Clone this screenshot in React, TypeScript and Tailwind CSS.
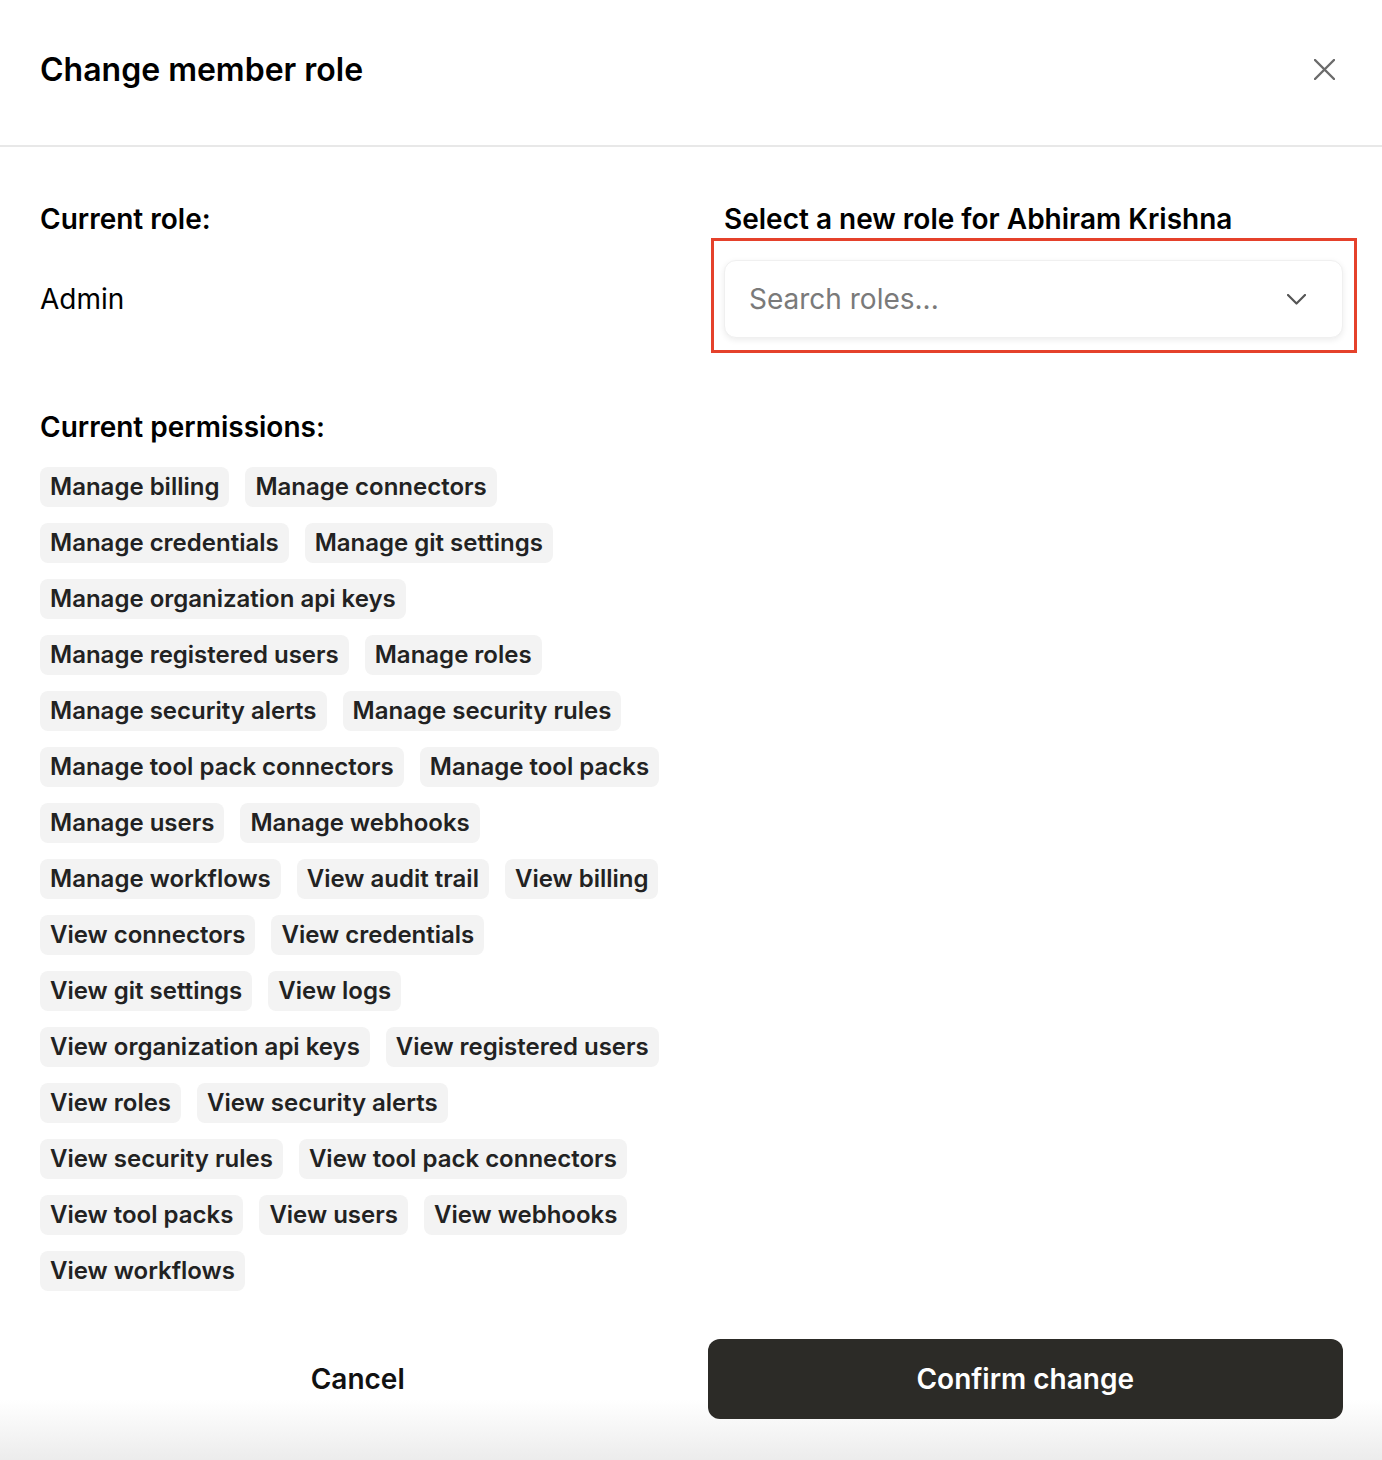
const permissionRows: string[][] = [
  ['Manage billing', 'Manage connectors'],
  ['Manage credentials', 'Manage git settings'],
  ['Manage organization api keys'],
  ['Manage registered users', 'Manage roles'],
  ['Manage security alerts', 'Manage security rules'],
  ['Manage tool pack connectors', 'Manage tool packs'],
  ['Manage users', 'Manage webhooks'],
  ['Manage workflows', 'View audit trail', 'View billing'],
  ['View connectors', 'View credentials'],
  ['View git settings', 'View logs'],
  ['View organization api keys', 'View registered users'],
  ['View roles', 'View security alerts'],
  ['View security rules', 'View tool pack connectors'],
  ['View tool packs', 'View users', 'View webhooks'],
  ['View workflows'],
]

function Chip({ label }: { label: string }) {
  return (
    <span className="inline-flex h-10 items-center rounded-lg bg-[#f3f3f3] px-[10px] text-[24px] font-semibold leading-none text-[#222]">
      {label}
    </span>
  )
}

export default function App() {
  return (
    <div className="relative min-h-[1460px] w-full bg-white font-['Inter',sans-serif] text-black">
      {/* bottom fade of the sheet */}
      <div className="absolute bottom-0 left-0 right-0 h-[60px] bg-gradient-to-b from-white to-[#ececec]" />

      {/* Header */}
      <div className="relative flex h-[147px] items-center justify-between border-b-2 border-[#e8e8e8] pb-[6px] pl-10 pr-[46px]">
        <h1 className="text-[32px] font-semibold">Change member role</h1>
        <button className="flex h-6 w-6 items-center justify-center">
          <svg width="21" height="21" viewBox="0 0 21 21" fill="none" stroke="#6b6b6b" strokeWidth="2.4" strokeLinecap="round">
            <path d="M1 1L20 20M20 1L1 20" />
          </svg>
        </button>
      </div>

      {/* Body */}
      <div className="relative pl-10 pr-[39px] pt-[54px]">
        <div className="grid grid-cols-2 gap-x-[65px]">
          <div>
            <h2 className="text-[28px] font-semibold leading-[36px]">Current role:</h2>
            <div className="mt-[23px] flex h-[78px] items-center text-[28px]">Admin</div>
          </div>
          <div>
            <h2 className="text-[28px] font-semibold leading-[36px]">Select a new role for Abhiram Krishna</h2>
            <div className="relative mt-[23px]">
              <div className="flex h-[78px] items-center justify-between rounded-xl border border-[#f0f0f0] bg-white pl-6 pr-9 shadow-[0_2px_6px_rgba(0,0,0,0.08)]">
                <span className="text-[28px] text-[#7a7a7a]">Search roles...</span>
                <svg width="19" height="11" viewBox="0 0 19 11" fill="none" stroke="#555" strokeWidth="2.2" strokeLinecap="round" strokeLinejoin="round">
                  <path d="M1 1L9.5 9.5L18 1" />
                </svg>
              </div>
              <div className="pointer-events-none absolute -bottom-[15px] -left-[13px] -right-[14px] -top-[22px] border-[3px] border-[#e5412b]" />
            </div>
          </div>
        </div>

        <h2 className="mt-[71px] text-[28px] font-semibold leading-[36px]">Current permissions:</h2>
        <div className="mt-[22px] flex flex-col gap-4">
          {permissionRows.map((row, i) => (
            <div key={i} className="flex gap-4">
              {row.map((p) => (
                <Chip key={p} label={p} />
              ))}
            </div>
          ))}
        </div>

        {/* Footer */}
        <div className="mt-12 grid grid-cols-2 gap-8">
          <button className="h-20 rounded-xl text-[28px] font-semibold text-[#111]">Cancel</button>
          <button className="h-20 rounded-xl bg-[#2c2b27] text-[28px] font-semibold text-white">Confirm change</button>
        </div>
      </div>
    </div>
  )
}
